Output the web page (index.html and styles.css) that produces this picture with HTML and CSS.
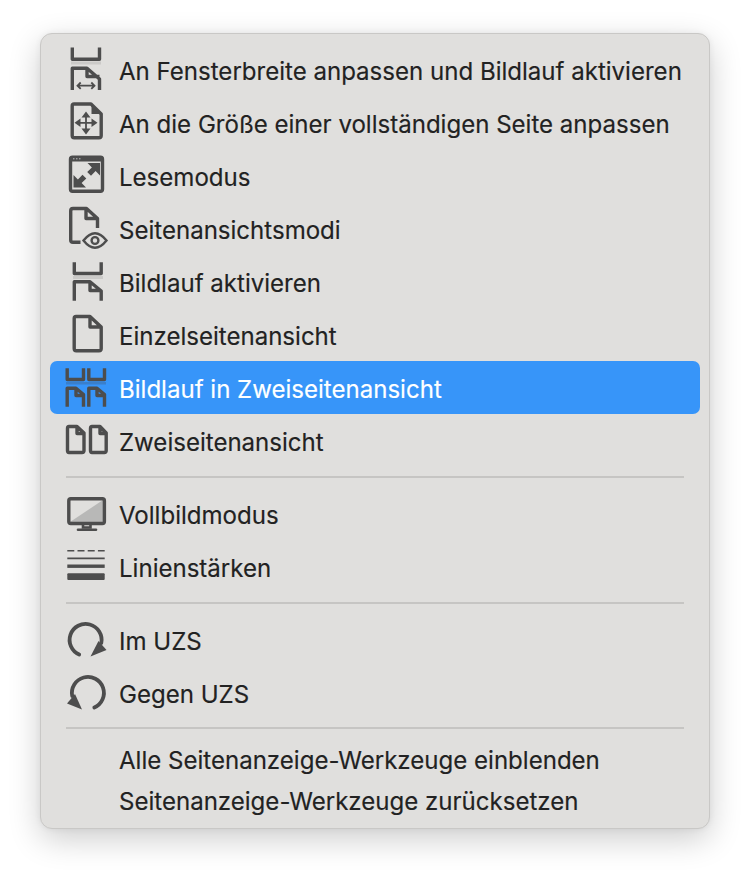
FILE: index.html
```html
<!DOCTYPE html>
<html lang="de">
<head>
<meta charset="utf-8">
<title>Menü</title>
<link rel="stylesheet" href="styles.css">
</head>
<body>
<div class="menu">
  <div class="row">
    <svg class="icon" viewBox="60 43 50 53">
      <path class="s" d="M72.3 47.5V59.2H99.5V47.5M72.3 90V68.3H87L99.5 79V90M87 68.3V76.5H99.5"/>
      <rect class="band" x="71" y="61.5" width="30" height="3"/>
      <path class="t" d="M77.5 85.7H94.5M80.7 82.5L77.5 85.7L80.7 88.9M91.3 82.5L94.5 85.7L91.3 88.9"/>
    </svg>
    <span class="label">An Fensterbreite anpassen und Bildlauf aktivieren</span>
  </div>
  <div class="row">
    <svg class="icon" viewBox="60 96 50 53">
      <path class="s" d="M74 104H91L101.2 114V135.5Q101.2 137.8 99 137.8H74.3Q72.2 137.8 72.2 135.5V106Q72.2 104 74 104Z"/>
      <path class="f" d="M91.5 105L101 114H91.5Z"/>
      <path class="a" d="M86 115.5V130M79 122.8H93"/>
      <path class="f" d="M86 111.5L90.5 117.5H81.5ZM86 134.5L81.5 128.5H90.5ZM74.5 122.8L80.5 118.5V127ZM97.5 122.8L91.5 127V118.5Z"/>
    </svg>
    <span class="label">An die Größe einer vollständigen Seite anpassen</span>
  </div>
  <div class="row">
    <svg class="icon" viewBox="60 149 50 53">
      <rect class="s" x="70.5" y="157.2" width="32" height="34" rx="2"/>
      <rect class="f" x="70" y="156.5" width="33" height="5"/>
      <path class="dots" d="M73 158.8H74.5M76 158.8H77.5M79 158.8H80.5"/>
      <path class="f" d="M100 163V175.5L95.6 171.1L91 175.8L87.2 172L91.9 167.4L87.5 163ZM73.5 187.5V175L77.9 179.4L82.5 174.7L86.3 178.5L81.6 183.1L86 187.5Z"/>
    </svg>
    <span class="label">Lesemodus</span>
  </div>
  <div class="row">
    <svg class="icon" viewBox="60 202 50 53">
      <path class="s" d="M97.5 228V218.5L86.5 208.5H73Q70.7 208.5 70.7 211V240Q70.7 242.2 73 242.2H80.5M86 208.5V218.5H97.5"/>
      <path class="e" d="M83.5 240.5Q95 226 106.5 240.5Q95 255 83.5 240.5Z"/>
      <circle class="e" cx="95" cy="240.5" r="3.4"/>
    </svg>
    <span class="label">Seitenansichtsmodi</span>
  </div>
  <div class="row">
    <svg class="icon" viewBox="60 255 50 53">
      <path class="s" d="M74.3 262.3V273.5H101.2V262.3M74.3 300.7V281.7H90L101.2 291V300.7M90 281.7V290.5H101.2"/>
      <rect class="band" x="73" y="276" width="30" height="3"/>
    </svg>
    <span class="label">Bildlauf aktivieren</span>
  </div>
  <div class="row">
    <svg class="icon" viewBox="60 308 50 53">
      <path class="s" d="M76 316.5H90L101.2 327V348.5Q101.2 350.8 99 350.8H76.3Q74.2 350.8 74.2 348.5V318.5Q74.2 316.5 76 316.5ZM90 316.5V327H101.2"/>
    </svg>
    <span class="label">Einzelseitenansicht</span>
  </div>
  <div class="row active">
    <svg class="icon" viewBox="60 361 50 53">
      <path class="s" d="M67.2 368.3V379.5H83.5V368.3M88.8 368.3V379.5H104.5V368.3"/>
      <rect class="band-on" x="66" y="382" width="40" height="2.5"/>
      <path class="s" d="M67.2 406.7V388.2H76L83.5 394.5V406.7M76 388.2V395.5H83.5M88.8 406.7V388.2H97L104.5 394.5V406.7M97 388.2V395.5H104.5"/>
    </svg>
    <span class="label">Bildlauf in Zweiseitenansicht</span>
  </div>
  <div class="row">
    <svg class="icon" viewBox="60 414 50 53">
      <path class="s" d="M69 426.5H77L84 433V450.5Q84 452.5 82 452.5H69Q67.5 452.5 67.5 450.5V428.5Q67.5 426.5 69 426.5ZM77 426.5V433.5H84M92 426.5H100L106.2 433V450.5Q106.2 452.5 104.2 452.5H92Q90.5 452.5 90.5 450.5V428.5Q90.5 426.5 92 426.5ZM100 426.5V433.5H106.2"/>
    </svg>
    <span class="label">Zweiseitenansicht</span>
  </div>
  <div class="sep"></div>
  <div class="row">
    <svg class="icon" viewBox="60 487 50 53">
      <path class="shade" d="M70 522L103 500V522Z"/>
      <rect class="s" x="68.8" y="498.8" width="35.6" height="24.7" rx="2"/>
      <path class="s2" d="M83 524.5V527.5H90.5V524.5"/>
      <path class="s2" d="M78 529.7H96"/>
    </svg>
    <span class="label">Vollbildmodus</span>
  </div>
  <div class="row">
    <svg class="icon" viewBox="60 540 50 53">
      <path class="d" d="M67.3 550.7H104.7"/>
      <path class="t" d="M67.3 558.3H104.7"/>
      <rect class="f" x="67.3" y="564.5" width="37.4" height="3.4"/>
      <rect class="f" x="67.3" y="573.3" width="37.4" height="6.7" rx="1"/>
    </svg>
    <span class="label">Linienstärken</span>
  </div>
  <div class="sep"></div>
  <div class="row">
    <svg class="icon" viewBox="60 613 50 53">
      <path class="r" d="M79.2 654.6A16 16 0 1 1 101.3 643"/>
      <path class="f" d="M90.5 656.5L106.5 650L98.5 641Z"/>
    </svg>
    <span class="label">Im UZS</span>
  </div>
  <div class="row">
    <svg class="icon" viewBox="60 666 50 53">
      <path class="r" d="M94.3 707.6A16 16 0 1 0 72.2 696"/>
      <path class="f" d="M82 709.5L67 703.5L75 694Z"/>
    </svg>
    <span class="label">Gegen UZS</span>
  </div>
  <div class="sep last"></div>
  <div class="row short"><span class="icon"></span><span class="label">Alle Seitenanzeige-Werkzeuge einblenden</span></div>
  <div class="row short"><span class="icon"></span><span class="label">Seitenanzeige-Werkzeuge zurücksetzen</span></div>
</div>
</body>
</html>
```
FILE: styles.css
```css
html, body { margin: 0; padding: 0; background: #fff; }
body { width: 750px; height: 876px; overflow: hidden; }
.menu {
  box-sizing: border-box;
  width: 670px;
  height: 796px;
  margin: 33px 0 0 40px;
  padding: 9px 9px 0;
  background: #e0dfdd;
  border: 1px solid #c9c8c6;
  border-radius: 12px;
  box-shadow: 0 10px 32px rgba(0, 0, 0, .2), 0 0 6px rgba(0, 0, 0, .06);
  font-family: Inter, "Liberation Sans", sans-serif;
  font-size: 24.05px;
  color: #222;
  -webkit-text-stroke: .15px #222;
}
.row {
  display: flex;
  align-items: center;
  height: 53px;
  padding-left: 10px;
  border-radius: 7px;
  white-space: nowrap;
}
.row.short { height: 41px; }
.row.active { background: #3795f9; color: #fff; -webkit-text-stroke: .15px #fff; }
.icon { flex: none; display: block; width: 50px; height: 53px; margin-right: 9px; }
.short .icon { height: 41px; }
.label { position: relative; top: 2px; }
.sep { height: 2px; margin: 9px 16px; background: #c6c5c3; }
.sep.last { margin: 8px 16px 9px; }
.s { fill: none; stroke: #4d4d4d; stroke-width: 3.4; stroke-linejoin: round; }
.s2 { fill: none; stroke: #4d4d4d; stroke-width: 2.6; stroke-linecap: round; }
.t { fill: none; stroke: #4d4d4d; stroke-width: 1.8; }
.a { fill: none; stroke: #4d4d4d; stroke-width: 1.8; }
.d { fill: none; stroke: #4d4d4d; stroke-width: 1.6; stroke-dasharray: 7 3.2; }
.e { fill: none; stroke: #4d4d4d; stroke-width: 2.4; }
.r { fill: none; stroke: #4d4d4d; stroke-width: 3.8; stroke-linecap: round; }
.f { fill: #4d4d4d; }
.dots { fill: none; stroke: #bdbdbd; stroke-width: 1; }
.band { fill: #cbcac8; }
.band-on { fill: #3a7fcb; }
.shade { fill: #b8b8b7; }
```
